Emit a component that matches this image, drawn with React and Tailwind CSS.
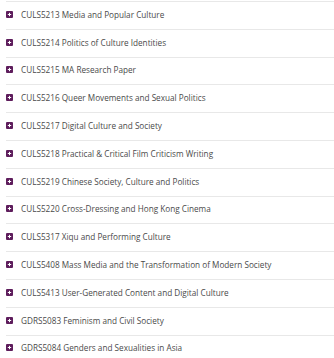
import React from 'react';

const courses = [
  'CULS5213 Media and Popular Culture',
  'CULS5214 Politics of Culture Identities',
  'CULS5215 MA Research Paper',
  'CULS5216 Queer Movements and Sexual Politics',
  'CULS5217 Digital Culture and Society',
  'CULS5218 Practical & Critical Film Criticism Writing',
  'CULS5219 Chinese Society, Culture and Politics',
  'CULS5220 Cross-Dressing and Hong Kong Cinema',
  'CULS5317 Xiqu and Performing Culture',
  'CULS5408 Mass Media and the Transformation of Modern Society',
  'CULS5413 User-Generated Content and Digital Culture',
  'GDRS5083 Feminism and Civil Society',
  'GDRS5084 Genders and Sexualities in Asia',
];

function PlusIcon() {
  return (
    <span className="w-[7px] h-[7px] mb-[2px] rounded-[1px] bg-[#5e1d5c] flex items-center justify-center shrink-0">
      <svg width="5" height="5" viewBox="0 0 5 5">
        <path d="M2.5 0.8v3.4M0.8 2.5h3.4" stroke="#fff" strokeWidth="1" />
      </svg>
    </span>
  );
}

export default function App() {
  return (
    <div className="w-[334px] h-[358px] overflow-hidden bg-white pl-[6px] pt-[1px] font-['Open_Sans',sans-serif]">
      {courses.map((c) => (
        <div key={c} className="h-[27.8px] border-t border-[#e8e8e8] flex items-center gap-[8px]">
          <PlusIcon />
          <span className="text-[8.2px] text-[#4a4a4a] leading-none whitespace-nowrap pb-[1px]">{c}</span>
        </div>
      ))}
    </div>
  );
}
